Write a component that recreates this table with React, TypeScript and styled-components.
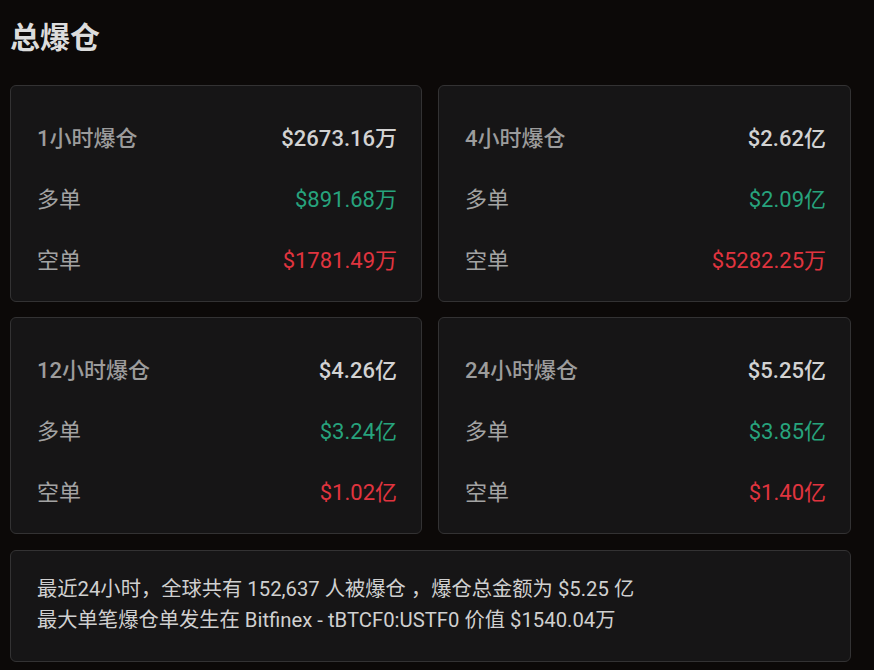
import React from 'react';
import styled, { createGlobalStyle } from 'styled-components';

const GlobalStyle = createGlobalStyle`
    body {
        margin: 0;
        background-color: #0c0908;
        font-family: Roboto, "Noto Sans CJK SC", sans-serif;
    }
`;

type Period = {
    title: string;
    total: string;
    long: string;
    short: string;
};

const periods: Period[] = [
    { title: '1小时爆仓', total: '$2673.16万', long: '$891.68万', short: '$1781.49万' },
    { title: '4小时爆仓', total: '$2.62亿', long: '$2.09亿', short: '$5282.25万' },
    { title: '12小时爆仓', total: '$4.26亿', long: '$3.24亿', short: '$1.02亿' },
    { title: '24小时爆仓', total: '$5.25亿', long: '$3.85亿', short: '$1.40亿' },
];

const App = () => {
    return (
        <>
            <GlobalStyle />
            <Page>
                <Title>总爆仓</Title>
                <Grid>
                    {periods.map((p) => (
                        <Card key={p.title}>
                            <Row>
                                <Label $strong>{p.title}</Label>
                                <Value $tone="total">{p.total}</Value>
                            </Row>
                            <Row>
                                <Label>多单</Label>
                                <Value $tone="long">{p.long}</Value>
                            </Row>
                            <Row>
                                <Label>空单</Label>
                                <Value $tone="short">{p.short}</Value>
                            </Row>
                        </Card>
                    ))}
                </Grid>
                <Summary>
                    <SummaryLine>最近24小时，全球共有 152,637 人被爆仓 ，爆仓总金额为 $5.25 亿</SummaryLine>
                    <SummaryLine>最大单笔爆仓单发生在 Bitfinex - tBTCF0:USTF0 价值 $1540.04万</SummaryLine>
                </Summary>
            </Page>
        </>
    );
};

const Page = styled.div`
    width: 841px;
    padding: 19px 0 8px 10px;
    display: flex;
    flex-direction: column;
    gap: 16px;
`;

const Title = styled.h1`
    margin: 0 0 12px 0;
    font-size: 30px;
    line-height: 38px;
    font-weight: 700;
    color: #dcdcdc;
`;

const Grid = styled.div`
    display: grid;
    grid-template-columns: 412px 413px;
    column-gap: 16px;
    row-gap: 15px;
`;

const Card = styled.div`
    box-sizing: border-box;
    height: 217px;
    padding: 19px 24px 0 26px;
    background-color: #161516;
    border: 1px solid #333233;
    border-radius: 6px;
    display: flex;
    flex-direction: column;
`;

const Row = styled.div`
    height: 61px;
    display: flex;
    align-items: center;
    justify-content: space-between;
`;

const Label = styled.span<{ $strong?: boolean }>`
    font-size: 22px;
    font-weight: ${(p) => (p.$strong ? 500 : 400)};
    color: ${(p) => (p.$strong ? '#9c9c9c' : '#a3a3a3')};
`;

const toneColors = {
    total: '#d2d2d2',
    long: '#27a37d',
    short: '#e0343f',
};

const Value = styled.span<{ $tone: keyof typeof toneColors }>`
    font-size: 22px;
    font-weight: ${(p) => (p.$tone === 'total' ? 500 : 400)};
    color: ${(p) => toneColors[p.$tone]};
`;

const Summary = styled.div`
    box-sizing: border-box;
    height: 112px;
    padding: 23px 26px;
    background-color: #161516;
    border: 1px solid #333233;
    border-radius: 6px;
`;

const SummaryLine = styled.div`
    font-size: 20.3px;
    line-height: 31px;
    color: #d0d0d0;
    white-space: nowrap;
`;

export default App;
